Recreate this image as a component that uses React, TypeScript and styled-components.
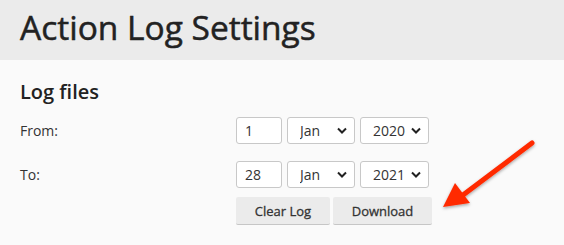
import styled, { createGlobalStyle } from "styled-components";

const GlobalStyle = createGlobalStyle`
  html, body {
    margin: 0;
    padding: 0;
    background: #fafafa;
    font-family: "Open Sans", "Liberation Sans", sans-serif;
    color: #333;
  }
`;

const months = ["Jan", "Feb", "Mar", "Apr", "May", "Jun", "Jul", "Aug", "Sep", "Oct", "Nov", "Dec"];
const years = ["2019", "2020", "2021"];

const App = () => {
  return (
    <>
      <GlobalStyle />
      <Page>
        <Header>
          <Title>Action Log Settings</Title>
        </Header>
        <Body>
          <SectionTitle>Log files</SectionTitle>
          <Form>
            <Label>From:</Label>
            <DateGroup>
              <DayInput defaultValue="1" />
              <Select $width={68} defaultValue="Jan">
                {months.map((m) => <option key={m}>{m}</option>)}
              </Select>
              <Select $width={69} defaultValue="2020">
                {years.map((y) => <option key={y}>{y}</option>)}
              </Select>
            </DateGroup>
            <Label>To:</Label>
            <DateGroup>
              <DayInput defaultValue="28" />
              <Select $width={68} defaultValue="Jan">
                {months.map((m) => <option key={m}>{m}</option>)}
              </Select>
              <Select $width={69} defaultValue="2021">
                {years.map((y) => <option key={y}>{y}</option>)}
              </Select>
            </DateGroup>
            <span />
            <ButtonRow>
              <Button $width={94}>Clear Log</Button>
              <Button $width={99}>Download</Button>
            </ButtonRow>
          </Form>
          <Arrow width="110" height="85" viewBox="0 0 110 85">
            <defs>
              <filter id="shadow" x="-20%" y="-20%" width="140%" height="140%">
                <feDropShadow dx="0" dy="1.5" stdDeviation="1.5" floodColor="#000" floodOpacity="0.35" />
              </filter>
            </defs>
            <g filter="url(#shadow)">
              <line x1="99" y1="10" x2="30" y2="62" stroke="#ff2a06" strokeWidth="5" strokeLinecap="round" />
              <polygon points="10,74 22,50 37,70" fill="#ff2a06" />
            </g>
          </Arrow>
        </Body>
      </Page>
    </>
  );
};

const Page = styled.div`
  width: 564px;
  height: 245px;
  overflow: hidden;
  background: #fafafa;
`;

const Header = styled.div`
  height: 60px;
  background: #ebebeb;
  display: flex;
  align-items: center;
  padding-left: 20px;
  box-sizing: border-box;
`;

const Title = styled.h1`
  margin: 0;
  font-size: 33.5px;
  font-weight: 400;
  -webkit-text-stroke: 0.5px #222;
  color: #222;
  line-height: 1;
  padding-bottom: 4px;
`;

const Body = styled.div`
  position: relative;
  padding: 18px 20px 0;
`;

const SectionTitle = styled.h2`
  margin: 0 0 12px;
  font-size: 20px;
  font-weight: 600;
  color: #222;
  line-height: 27px;
`;

const Form = styled.div`
  display: grid;
  grid-template-columns: 216px auto;
  row-gap: 17px;
  align-items: start;

  & > :nth-last-child(-n + 2) {
    margin-top: -8px;
  }
`;

const Label = styled.div`
  font-size: 14px;
  line-height: 27px;
  color: #333;
`;

const DateGroup = styled.div`
  display: flex;
  gap: 5px;
`;

const DayInput = styled.input`
  width: 46px;
  height: 27px;
  box-sizing: border-box;
  border: 1px solid #c8c8c8;
  border-radius: 3px;
  background: #fff;
  padding: 0 8px;
  font-family: inherit;
  font-size: 14px;
  color: #333;
  outline: none;
`;

const Select = styled.select<{ $width: number }>`
  width: ${(p) => p.$width}px;
  height: 27px;
  box-sizing: border-box;
  border: 1px solid #c8c8c8;
  border-radius: 3px;
  background: #fff url("data:image/svg+xml,%3Csvg xmlns='http://www.w3.org/2000/svg' width='10' height='7' viewBox='0 0 10 7'%3E%3Cpath d='M1 1.5l4 4 4-4' fill='none' stroke='%23222' stroke-width='2'/%3E%3C/svg%3E") no-repeat right 7px center;
  appearance: none;
  padding: 0 0 0 12px;
  font-family: inherit;
  font-size: 14px;
  color: #333;
`;

const ButtonRow = styled.div`
  display: flex;
  gap: 3px;
`;

const Button = styled.button<{ $width: number }>`
  width: ${(p) => p.$width}px;
  height: 28px;
  border: none;
  border-bottom: 1px solid #c6c6c6;
  border-radius: 2px;
  background: #ebebeb;
  font-family: inherit;
  font-size: 13px;
  font-weight: 400;
  -webkit-text-stroke: 0.3px #333;
  color: #333;
  padding: 0;
`;

const Arrow = styled.svg`
  position: absolute;
  left: 433px;
  top: 73px;
`;

export default App;
